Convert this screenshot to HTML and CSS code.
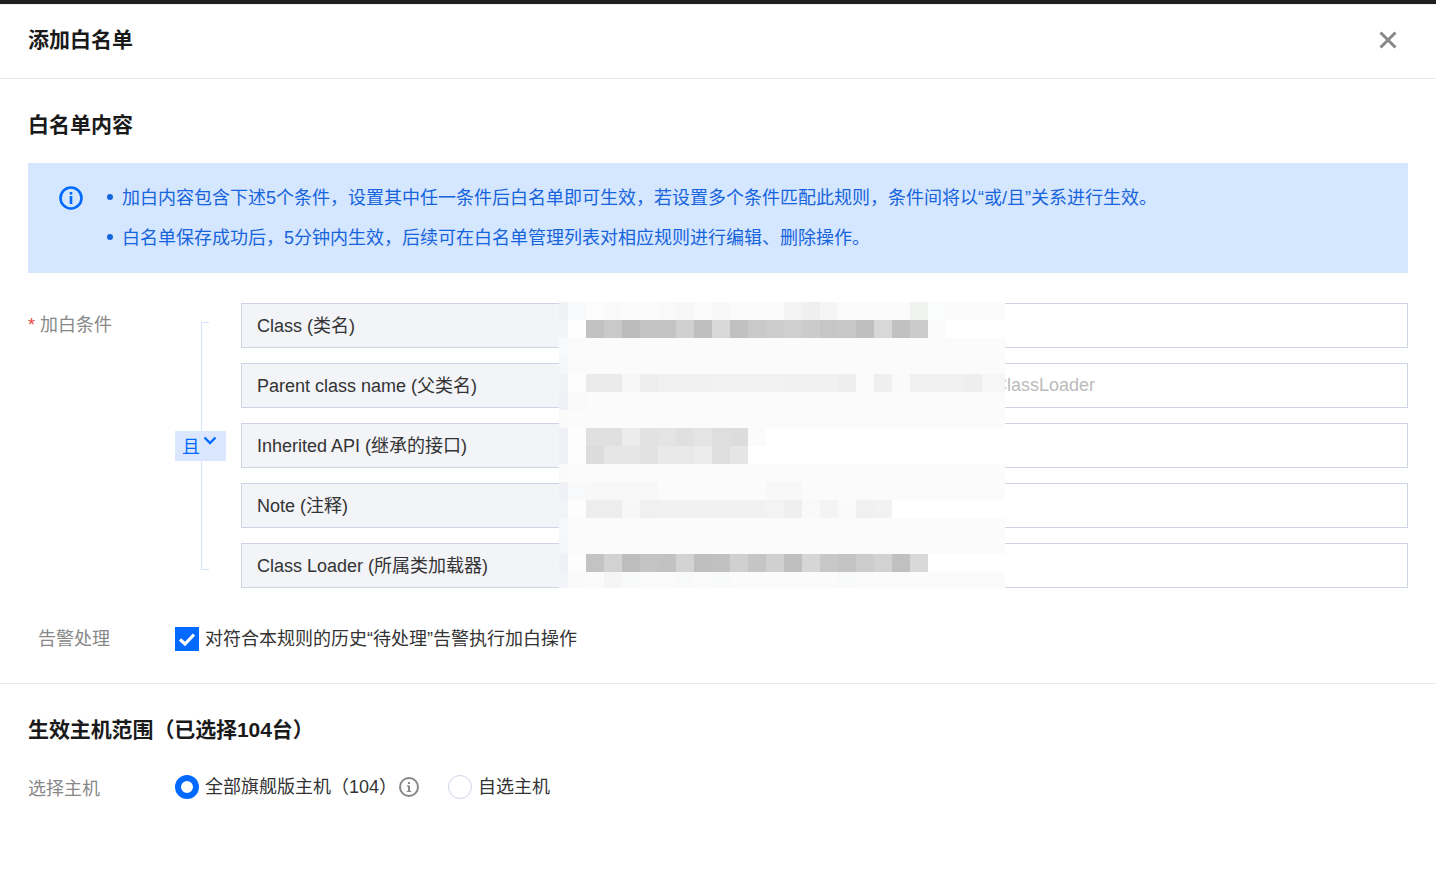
FILE: index.html
```html
<!DOCTYPE html>
<html lang="zh-CN">
<head>
<meta charset="utf-8">
<title>添加白名单</title>
<link rel="stylesheet" href="styles.css">
</head>
<body>
<div class="topbar"></div>
<div class="dialog">
  <header class="head">
    <h1 class="title">添加白名单</h1>
    <svg class="close" width="20" height="20" viewBox="0 0 20 20"><path d="M2.500 2.500 17.500 17.500M17.500 2.500 2.500 17.500" stroke="#888" stroke-width="3" fill="none"/></svg>
  </header>
  <section class="section first">
    <h2 class="title sub">白名单内容</h2>
    <div class="alert">
      <svg class="alert-icon" width="24" height="24" viewBox="0 0 24 24"><circle cx="12" cy="12" r="10.500" fill="none" stroke="#0069ff" stroke-width="2.600"/><rect x="10.700" y="10" width="2.600" height="8" fill="#0069ff"/><rect x="10.700" y="6" width="2.600" height="2.600" fill="#0069ff"/></svg>
      <ul class="alert-list">
        <li>加白内容包含下述5个条件，设置其中任一条件后白名单即可生效，若设置多个条件匹配此规则，条件间将以“或/且”关系进行生效。</li>
        <li>白名单保存成功后，5分钟内生效，后续可在白名单管理列表对相应规则进行编辑、删除操作。</li>
      </ul>
    </div>
    <div class="cond">
      <div class="cond-label"><span class="req">*</span> 加白条件</div>
      <div class="logic">
        <div class="bracket"></div>
        <div class="tag">且<svg class="tag-arrow" width="14" height="9" viewBox="0 0 14 9"><path d="M1.500 1.500 7 7 12.500 1.500" fill="none" stroke="#0069ff" stroke-width="2.400"/></svg></div>
      </div>
      <div class="fields">
        <div class="field"><span class="addon">Class (类名)</span><span class="input"></span></div>
        <div class="field"><span class="addon">Parent class name (父类名)</span><span class="input placeholder">ClassLoader</span></div>
        <div class="field"><span class="addon">Inherited API (继承的接口)</span><span class="input"></span></div>
        <div class="field"><span class="addon">Note (注释)</span><span class="input"></span></div>
        <div class="field"><span class="addon">Class Loader (所属类加载器)</span><span class="input"></span></div>
        <svg class="mosaic" width="446" height="286" viewBox="559 302 446 286" shape-rendering="crispEdges">
          <rect x="559" y="302" width="446" height="286" fill="#fbfbfb"/>
          <!-- left edge columns -->
          <rect x="559" y="302" width="9" height="18" fill="#eff1f5"/><rect x="568" y="302" width="18" height="18" fill="#f8f9fb"/>
          <rect x="559" y="320" width="9" height="18" fill="#f2f4f8"/><rect x="568" y="320" width="18" height="18" fill="#fefefe"/>
          <rect x="559" y="338" width="9" height="18" fill="#f8f9fa"/>
          <rect x="559" y="356" width="9" height="18" fill="#f5f6f9"/>
          <rect x="559" y="374" width="9" height="18" fill="#f0f2f6"/><rect x="568" y="374" width="18" height="18" fill="#fdfdfd"/>
          <rect x="559" y="392" width="9" height="18" fill="#eff1f6"/><rect x="568" y="392" width="18" height="18" fill="#f9f9fa"/>
          <rect x="559" y="410" width="9" height="18" fill="#fafafb"/>
          <rect x="559" y="428" width="9" height="36" fill="#eff1f6"/><rect x="568" y="428" width="18" height="36" fill="#fdfdfd"/>
          <rect x="559" y="464" width="9" height="18" fill="#fafafb"/>
          <rect x="559" y="482" width="9" height="18" fill="#eff1f6"/><rect x="568" y="482" width="18" height="18" fill="#f8f9fa"/>
          <rect x="559" y="500" width="9" height="18" fill="#f1f3f7"/><rect x="568" y="500" width="18" height="18" fill="#fdfdfd"/>
          <rect x="559" y="518" width="9" height="18" fill="#f7f8fa"/>
          <rect x="559" y="536" width="9" height="18" fill="#f5f6f9"/>
          <rect x="559" y="554" width="9" height="18" fill="#eff1f6"/><rect x="568" y="554" width="18" height="18" fill="#fdfdfd"/>
          <rect x="559" y="572" width="9" height="16" fill="#f3f4f8"/><rect x="568" y="572" width="18" height="16" fill="#fafafb"/>
          <!-- row 302 -->
          <rect x="586" y="302" width="18" height="18" fill="#fcfcfc"/><rect x="604" y="302" width="18" height="18" fill="#f9f9f9"/><rect x="658" y="302" width="18" height="18" fill="#f9f9f9"/><rect x="676" y="302" width="18" height="18" fill="#f7f7f7"/><rect x="712" y="302" width="18" height="18" fill="#f8f8f8"/><rect x="784" y="302" width="18" height="18" fill="#f3f4f3"/><rect x="802" y="302" width="18" height="18" fill="#efefef"/><rect x="820" y="302" width="18" height="18" fill="#f4f5f4"/><rect x="910" y="302" width="18" height="18" fill="#f1f3f1"/><rect x="928" y="302" width="18" height="18" fill="#fbfdfc"/>
          <!-- row 320 -->
          <rect x="586" y="320" width="419" height="18" fill="#fff"/>
          <rect x="586" y="320" width="18" height="18" fill="#c2c2c2"/><rect x="604" y="320" width="18" height="18" fill="#c9c9c9"/><rect x="622" y="320" width="18" height="18" fill="#bcbcbc"/><rect x="640" y="320" width="18" height="18" fill="#c4c4c4"/><rect x="658" y="320" width="18" height="18" fill="#c4c4c4"/><rect x="676" y="320" width="18" height="18" fill="#d0d0d0"/><rect x="694" y="320" width="18" height="18" fill="#bfbfbf"/><rect x="712" y="320" width="18" height="18" fill="#d9d9d9"/><rect x="730" y="320" width="18" height="18" fill="#c1c1c1"/><rect x="748" y="320" width="18" height="18" fill="#c9c9c9"/><rect x="766" y="320" width="18" height="18" fill="#cccccc"/><rect x="784" y="320" width="18" height="18" fill="#cfcfcf"/><rect x="802" y="320" width="18" height="18" fill="#cbcbcb"/><rect x="820" y="320" width="18" height="18" fill="#c6c6c6"/><rect x="838" y="320" width="18" height="18" fill="#c8c8c8"/><rect x="856" y="320" width="18" height="18" fill="#bfbfbf"/><rect x="874" y="320" width="18" height="18" fill="#d8d8d8"/><rect x="892" y="320" width="18" height="18" fill="#c1c1c1"/><rect x="910" y="320" width="18" height="18" fill="#cbcbcb"/><rect x="928" y="320" width="18" height="18" fill="#fbfbfb"/>
          <!-- row 374 -->
          <rect x="586" y="374" width="18" height="18" fill="#eaeaea"/><rect x="604" y="374" width="18" height="18" fill="#eaeaea"/><rect x="622" y="374" width="18" height="18" fill="#f6f6f6"/><rect x="640" y="374" width="18" height="18" fill="#ededed"/><rect x="658" y="374" width="54" height="18" fill="#f0f0f0"/><rect x="712" y="374" width="72" height="18" fill="#f2f2f2"/><rect x="784" y="374" width="54" height="18" fill="#f1f1f1"/><rect x="838" y="374" width="18" height="18" fill="#eeeeee"/><rect x="874" y="374" width="18" height="18" fill="#efefef"/><rect x="892" y="374" width="18" height="18" fill="#fafafa"/><rect x="910" y="374" width="54" height="18" fill="#f1f1f1"/><rect x="964" y="374" width="18" height="18" fill="#eeeeee"/><rect x="982" y="374" width="23" height="18" fill="#f6f6f6"/>
          <!-- row 428 -->
          <rect x="586" y="428" width="419" height="36" fill="#fff"/>
          <rect x="586" y="428" width="18" height="18" fill="#e0e0e0"/><rect x="604" y="428" width="18" height="18" fill="#e0e0e0"/><rect x="622" y="428" width="18" height="18" fill="#ececec"/><rect x="640" y="428" width="18" height="18" fill="#e2e2e2"/><rect x="658" y="428" width="18" height="18" fill="#e4e4e4"/><rect x="676" y="428" width="18" height="18" fill="#e0e0e0"/><rect x="694" y="428" width="18" height="18" fill="#e4e4e4"/><rect x="712" y="428" width="18" height="18" fill="#dedede"/><rect x="730" y="428" width="18" height="18" fill="#dcdcdc"/><rect x="748" y="428" width="18" height="18" fill="#fbfbfb"/>
          <rect x="586" y="446" width="18" height="18" fill="#dcdcdc"/><rect x="604" y="446" width="18" height="18" fill="#e6e6e6"/><rect x="622" y="446" width="18" height="18" fill="#e6e6e6"/><rect x="640" y="446" width="18" height="18" fill="#e2e2e2"/><rect x="658" y="446" width="36" height="18" fill="#e9e9e9"/><rect x="694" y="446" width="18" height="18" fill="#ececec"/><rect x="712" y="446" width="18" height="18" fill="#dedede"/><rect x="730" y="446" width="18" height="18" fill="#e5e5e5"/>
          <!-- row 482 -->
          <rect x="586" y="482" width="72" height="18" fill="#f8f8f8"/><rect x="766" y="482" width="36" height="18" fill="#f8f8f8"/>
          <!-- row 500 -->
          <rect x="586" y="500" width="419" height="18" fill="#fff"/>
          <rect x="586" y="500" width="18" height="18" fill="#ededed"/><rect x="604" y="500" width="18" height="18" fill="#ededed"/><rect x="622" y="500" width="18" height="18" fill="#f7f7f7"/><rect x="640" y="500" width="18" height="18" fill="#f0f0f0"/><rect x="658" y="500" width="108" height="18" fill="#f1f1f1"/><rect x="766" y="500" width="18" height="18" fill="#f3f3f3"/><rect x="784" y="500" width="18" height="18" fill="#efefef"/><rect x="802" y="500" width="18" height="18" fill="#f9f9f9"/><rect x="820" y="500" width="18" height="18" fill="#f4f4f4"/><rect x="838" y="500" width="18" height="18" fill="#fafafa"/><rect x="856" y="500" width="18" height="18" fill="#f0f0f0"/><rect x="874" y="500" width="18" height="18" fill="#f2f2f2"/>
          <!-- row 554 -->
          <rect x="586" y="554" width="419" height="18" fill="#fff"/>
          <rect x="586" y="554" width="18" height="18" fill="#c3c3c3"/><rect x="604" y="554" width="18" height="18" fill="#d2d2d2"/><rect x="622" y="554" width="18" height="18" fill="#bdbdbd"/><rect x="640" y="554" width="18" height="18" fill="#c4c4c4"/><rect x="658" y="554" width="18" height="18" fill="#c2c2c2"/><rect x="676" y="554" width="18" height="18" fill="#d3d3d3"/><rect x="694" y="554" width="18" height="18" fill="#bfbfbf"/><rect x="712" y="554" width="18" height="18" fill="#c1c1c1"/><rect x="730" y="554" width="18" height="18" fill="#d0d0d0"/><rect x="748" y="554" width="18" height="18" fill="#c5c5c5"/><rect x="766" y="554" width="18" height="18" fill="#d0d0d0"/><rect x="784" y="554" width="18" height="18" fill="#bfbfbf"/><rect x="802" y="554" width="18" height="18" fill="#d6d6d6"/><rect x="820" y="554" width="18" height="18" fill="#c8c8c8"/><rect x="838" y="554" width="18" height="18" fill="#c3c3c3"/><rect x="856" y="554" width="18" height="18" fill="#cccccc"/><rect x="874" y="554" width="18" height="18" fill="#d2d2d2"/><rect x="892" y="554" width="18" height="18" fill="#c0c0c0"/><rect x="910" y="554" width="18" height="18" fill="#d9d9d9"/>
          <!-- row 572 -->
          <rect x="604" y="572" width="18" height="16" fill="#f5f5f5"/><rect x="622" y="572" width="18" height="16" fill="#f8faf9"/><rect x="676" y="572" width="18" height="16" fill="#f8faf9"/><rect x="712" y="572" width="18" height="16" fill="#f8faf9"/><rect x="838" y="572" width="18" height="16" fill="#f8faf9"/>
        </svg>
      </div>
    </div>
    <div class="row alarm">
      <div class="row-label alarm-label">告警处理</div>
      <span class="checkbox"><svg width="24" height="24" viewBox="0 0 24 24"><path d="M5 12.500 10 17 19 7.500" fill="none" stroke="#fff" stroke-width="3.200"/></svg></span>
      <span class="opt">对符合本规则的历史“待处理”告警执行加白操作</span>
    </div>
  </section>
  <section class="section second">
    <h2 class="title sub sub-hosts">生效主机范围（已选择104台）</h2>
    <div class="row hosts">
      <div class="row-label">选择主机</div>
      <span class="radio on"></span>
      <span class="opt">全部旗舰版主机（104）</span>
      <svg class="hint" width="20" height="20" viewBox="0 0 20 20"><circle cx="10" cy="10" r="9" fill="none" stroke="#888" stroke-width="2"/><rect x="9" y="8.500" width="2" height="6" fill="#888"/><rect x="9" y="5" width="2" height="2" fill="#888"/><rect x="7.800" y="8.500" width="2" height="1.200" fill="#888"/><rect x="7.800" y="13.800" width="4.400" height="1.200" fill="#888"/></svg>
      <span class="radio"></span>
      <span class="opt">自选主机</span>
    </div>
  </section>
</div>
</body>
</html>
```
FILE: styles.css
```css
* { box-sizing: border-box; }
html, body { margin: 0; padding: 0; }
body {
  width: 1436px;
  height: 896px;
  overflow: hidden;
  background: #fff;
  font-family: "Liberation Sans", "Noto Sans CJK SC", sans-serif;
  font-size: 18px;
  color: #333;
}
.topbar { height: 5px; background: #1f1f1f; border-bottom: 1px solid #eeeef4; }
.dialog { background: #fff; }
.head {
  height: 74px;
  padding: 0 38px 4px 28px;
  display: flex;
  align-items: center;
  justify-content: space-between;
  border-bottom: 1px solid #e8e8ee;
}
.title { margin: 0; font-size: 21px; line-height: 30px; font-weight: 700; color: #1a1a1a; }
.section { padding: 0 28px; }
.first { padding-top: 31px; height: 605px; border-bottom: 1px solid #e8e8ee; }
.second { padding-top: 31px; }
.sub { margin-bottom: 23px; }
.sub-hosts { margin-bottom: 30px; letter-spacing: -0.1px; }
.alert {
  height: 110px;
  background: #d5e6ff;
  color: #1664dc;
  display: flex;
  padding: 23px 0 0 31px;
}
.alert-icon { flex: none; margin-right: 24px; }
.alert-list { margin: -8px 0 0; padding: 0; list-style: none; line-height: 40px; font-size: 18px; }
.alert-list li { position: relative; padding-left: 15px; white-space: nowrap; }
.alert-list li::before {
  content: "";
  position: absolute;
  left: 0;
  top: 16px;
  width: 6px;
  height: 6px;
  border-radius: 50%;
  background: #1664dc;
}
.cond { display: flex; margin-top: 30px; position: relative; }
.cond-label { width: 147px; flex: none; color: #888; line-height: 44px; }
.req { color: #e54545; }
.logic { width: 66px; flex: none; position: relative; }
.bracket {
  position: absolute;
  left: 26px;
  top: 19px;
  width: 8px;
  height: 248px;
  border: 1px solid #d5e3ff;
  border-right: 0;
}
.tag {
  position: absolute;
  left: 0;
  top: 128px;
  width: 51px;
  height: 30px;
  background: #dbe7ff;
  color: #0069ff;
  padding-left: 7px;
  line-height: 32px;
  display: flex;
}
.tag-arrow { margin: 5px 0 0 3px; }
.fields { flex: 1; display: flex; flex-direction: column; gap: 15px; position: relative; }
.field { display: flex; height: 45px; }
.addon {
  width: 340px;
  flex: none;
  background: #f2f4f8;
  border: 1px solid #cdd5e4;
  border-right: 0;
  padding-left: 15px;
  line-height: 45px;
  color: #333;
}
.input {
  flex: 1;
  border: 1px solid #cdd5e4;
  line-height: 43px;
}
.placeholder { padding-left: 412px; color: #bbb; }
.mosaic { position: absolute; left: 318px; top: -1px; }
.row { display: flex; align-items: center; }
.row-label { width: 147px; flex: none; color: #888; }
.alarm { margin-top: 39px; height: 24px; }
.alarm-label { padding-left: 10px; line-height: 22px; }
.checkbox { width: 24px; height: 24px; background: #0069ff; margin-right: 6px; display: block; }
.checkbox svg { display: block; }
.opt { color: #333; line-height: 24px; }
.hosts { height: 24px; }
.radio {
  width: 24px;
  height: 24px;
  border-radius: 50%;
  border: 1px solid #cdd5e4;
  margin-right: 6px;
  background: #fff;
  flex: none;
  margin-left: 29px;
}
.radio.on { border: 6px solid #0069ff; margin-left: 0; }
.hint { margin-left: 2px; }
```
